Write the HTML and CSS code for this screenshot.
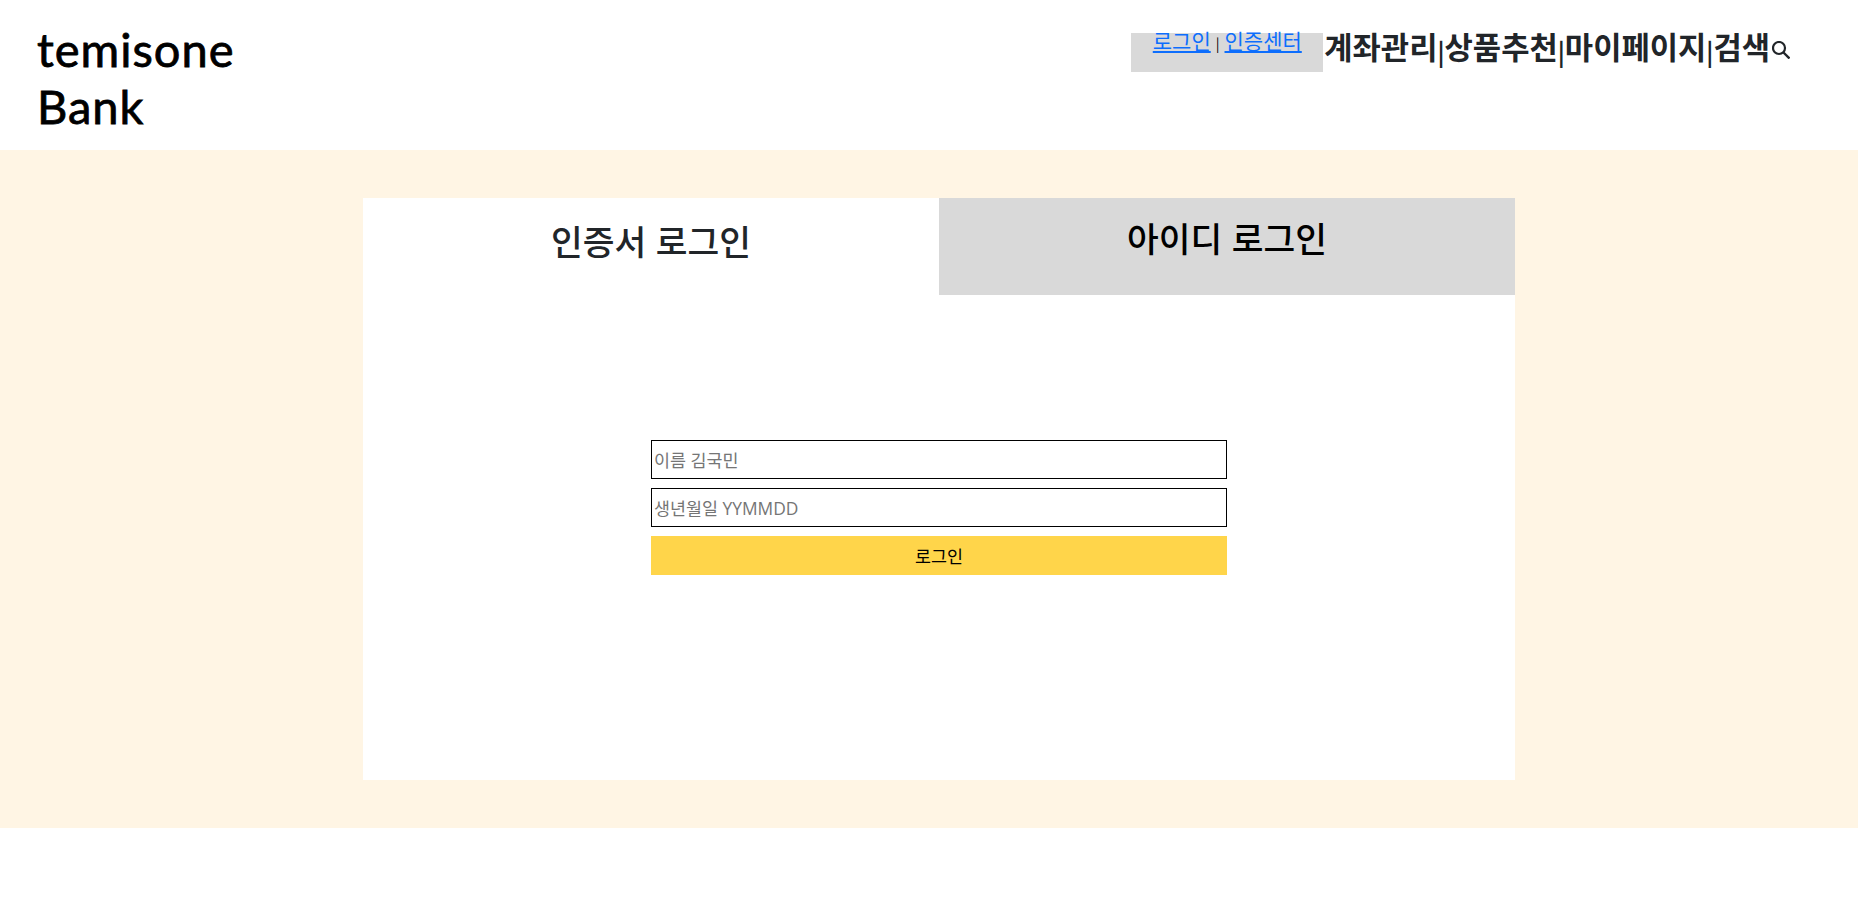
FILE: index.html
```html
<!DOCTYPE html>
<html lang="ko">
<head>
<meta charset="utf-8">
<title>temisone Bank</title>
<link rel="stylesheet" href="styles.css">
</head>
<body>
<header class="header">
  <a class="logo" href="#">temisone<br>Bank</a>
  <div class="header-right">
    <div class="util"><a href="#">로그인</a><span class="util-sep">|</span><a href="#">인증센터</a></div>
    <nav class="nav">
      <span>계좌관리</span><i class="nav-sep">|</i><span>상품추천</span><i class="nav-sep">|</i><span>마이페이지</span><i class="nav-sep">|</i><span>검색</span>
      <svg class="search" viewBox="0 0 18 18" width="18" height="18"><circle cx="7" cy="7" r="6" fill="none" stroke="#212529" stroke-width="2.2"/><path d="M11.5 11.5l6 6" stroke="#212529" stroke-width="2.4" fill="none"/></svg>
    </nav>
  </div>
</header>
<main class="main">
  <section class="card">
    <div class="tabs">
      <h2 class="tab tab-active">인증서 로그인</h2>
      <h2 class="tab tab-idle">아이디 로그인</h2>
    </div>
    <form class="form">
      <input class="field" type="text" placeholder="이름 김국민">
      <input class="field" type="text" placeholder="생년월일 YYMMDD">
      <button class="submit" type="button">로그인</button>
    </form>
  </section>
</main>
</body>
</html>
```
FILE: styles.css
```css
* { box-sizing: border-box; }
html, body { margin: 0; padding: 0; }
body {
  background: #fff;
  color: #212529;
  font-family: "Noto Sans CJK KR", "Noto Sans", sans-serif;
  height: 919px;
  overflow: hidden;
}
.header {
  height: 150px;
  display: flex;
  justify-content: space-between;
  padding: 0 68px 0 37px;
}
.logo {
  font-family: "Lato", sans-serif;
  font-size: 47px;
  font-weight: 400;
  letter-spacing: 1px;
  -webkit-text-stroke: 0.8px #000;
  line-height: 57px;
  color: #000;
  text-decoration: none;
  padding-top: 21px;
}
.header-right { display: flex; align-items: flex-start; padding-top: 33px; }
.util {
  width: 192px;
  height: 39px;
  background: #d9d9d9;
  text-align: center;
  font-size: 21px;
  line-height: 15px;
}
.util a { color: #0d6efd; }
.util-sep { font-size: 14px; margin: 0 5px; color: #000; }
.nav {
  display: flex;
  align-items: flex-start;
  font-size: 30.75px;
  font-weight: 700;
  line-height: 26px;
  padding-left: 1px;
}
.nav-sep { font-style: normal; font-size: 24px; line-height: 36px; font-weight: 700; }
.search { margin: 8px 0 0 2px; }
.main {
  height: 678px;
  background: #fff5e4;
  padding: 48px 0 0 20px;
}
.card {
  width: 1152px;
  height: 582px;
  margin: 0 auto;
  background: #fff;
}
.tabs { display: flex; height: 97px; }
.tab {
  flex: 1;
  margin: 0;
  text-align: center;
  font-size: 34.5px;
  font-weight: 500;
  line-height: 44px;
}
.tab-active { padding-top: 20px; }
.tab-idle { background: #d9d9d9; padding-top: 17px; color: #000; }
.form {
  width: 576px;
  margin: 145px auto 0;
  display: flex;
  flex-direction: column;
  gap: 9px;
}
.field {
  height: 39px;
  border: 1px solid #000;
  padding: 0 2px;
  font: 400 17.4px "Open Sans", "Noto Sans CJK KR", sans-serif;
  background: #fff;
  border-radius: 0;
  outline: none;
}
.field::placeholder { color: #757575; }
.submit {
  height: 39px;
  border: 0;
  background: #ffd54a;
  color: #000;
  font: 400 17.4px "Noto Sans CJK KR", sans-serif;
  padding: 0;
}
```
